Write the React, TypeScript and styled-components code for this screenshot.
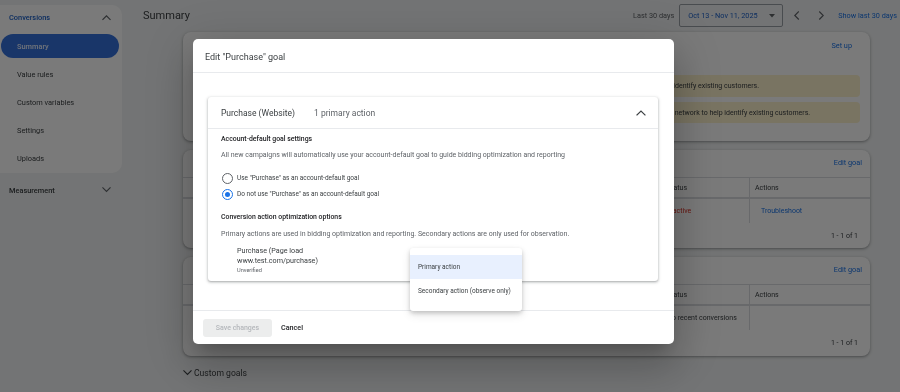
import React from "react";
import styled, { createGlobalStyle } from "styled-components";

const Global = createGlobalStyle`
  html, body { margin: 0; padding: 0; }
  body { font-family: Roboto, "Noto Sans", Arial, sans-serif; }
  * { box-sizing: border-box; }
`;

const Screen = styled.div`
  position: relative;
  width: 900px;
  height: 392px;
  overflow: hidden;
  display: flex;
  background: #f1f3f4;
  color: #3c4043;
  will-change: transform;
`;

/* ---------- sidebar ---------- */
const Sidebar = styled.nav`
  width: 122px;
  flex: none;
  padding-top: 5px;
  display: flex;
  flex-direction: column;
`;
const NavPanel = styled.div`
  background: #fff;
  border-radius: 0 10px 10px 0;
  padding-bottom: 3px;
  display: flex;
  flex-direction: column;
  gap: 4px;
`;
const NavGroup = styled.div<{ $open?: boolean }>`
  height: ${(p) => (p.$open ? 25 : 26)}px;
  margin-top: ${(p) => (p.$open ? 0 : 4)}px;
  display: flex;
  align-items: center;
  justify-content: space-between;
  padding: 0 11px 0 9px;
  font-size: 7.4px;
  font-weight: 500;
  color: ${(p) => (p.$open ? "#1a5fc8" : "#3c4043")};
`;
const NavItem = styled.div<{ $active?: boolean }>`
  height: 24px;
  margin: 0 3px 0 1px;
  border-radius: 12px;
  padding-left: 16px;
  display: flex;
  align-items: center;
  font-size: 7.4px;
  font-weight: ${(p) => (p.$active ? 500 : 400)};
  background: ${(p) => (p.$active ? "#3672dc" : "transparent")};
  color: ${(p) => (p.$active ? "#e8f0fe" : "#3c4043")};
`;

/* ---------- main ---------- */
const Main = styled.main`
  flex: 1;
  min-width: 0;
  display: flex;
  flex-direction: column;
`;
const TopBar = styled.header`
  height: 31px;
  display: flex;
  align-items: center;
  padding: 0 3px 0 21px;
`;
const PageTitle = styled.h1`
  margin: 0;
  flex: 1;
  font-size: 11px;
  font-weight: 400;
  color: #3c4043;
`;
const RangeLabel = styled.span`
  font-size: 7.3px;
  color: #5f6368;
  margin-right: 5px;
`;
const DateSelect = styled.div`
  width: 104px;
  height: 23px;
  border: 1px solid #9aa0a6;
  border-radius: 2px;
  display: flex;
  align-items: center;
  justify-content: space-between;
  padding: 0 7px 0 8px;
  font-size: 7.3px;
  color: #1a5fc8;
`;
const ArrowButton = styled.span<{ $gap: number }>`
  width: 16px;
  height: 16px;
  display: flex;
  align-items: center;
  justify-content: center;
  margin-left: ${(p) => p.$gap}px;
`;
const TopLink = styled.span`
  margin-left: 10px;
  font-size: 7.3px;
  color: #1a73e8;
`;
const Content = styled.div`
  padding: 1px 0 0 61px;
  width: 748px;
  display: flex;
  flex-direction: column;
  gap: 9px;
`;
const Card = styled.section<{ $h: number }>`
  height: ${(p) => p.$h}px;
  background: #fff;
  border-radius: 8px;
  box-shadow: 0 1px 2px rgba(60, 64, 67, 0.3), 0 1px 3px 1px rgba(60, 64, 67, 0.15);
  display: flex;
  flex-direction: column;
  overflow: hidden;
`;
const CardHeader = styled.div<{ $h: number; $pr: number }>`
  height: ${(p) => p.$h}px;
  flex: none;
  display: flex;
  align-items: center;
  justify-content: flex-end;
  padding: 0 ${(p) => p.$pr}px 2px 0;
  font-size: 7.3px;
  color: #1a73e8;
`;
const NoticeList = styled.div`
  display: flex;
  flex-direction: column;
  gap: 5px;
  padding: 15px 10px 0 12px;
`;
const Notice = styled.div<{ $h: number; $col: number }>`
  height: ${(p) => p.$h}px;
  background: #fdf2cc;
  border-radius: 4px;
  display: grid;
  grid-template-columns: ${(p) => p.$col}px 1fr;
  align-items: center;
  font-size: 7px;
  color: #3c4043;
`;
const TableRow = styled.div<{ $h: number; $head?: boolean }>`
  height: ${(p) => p.$h}px;
  flex: none;
  display: grid;
  grid-template-columns: 476px 90px 1fr;
  border-top: 1px solid #dadce0;
  ${(p) => (p.$head ? "border-bottom: 1px solid #dadce0;" : "")}
  font-size: 7px;
  color: #3c4043;
`;
const Cell = styled.div<{ $divider?: boolean; $pad?: number; $tone?: string }>`
  display: flex;
  align-items: center;
  padding-left: ${(p) => p.$pad ?? 8}px;
  border-left: ${(p) => (p.$divider ? "1px solid #dadce0" : "none")};
  color: ${(p) => p.$tone ?? "inherit"};
`;
const Pager = styled.div`
  flex: 1;
  display: flex;
  align-items: center;
  justify-content: flex-end;
  padding-right: 12px;
  font-size: 7px;
  color: #3c4043;
`;
const SectionToggle = styled.div`
  height: 16px;
  display: flex;
  align-items: center;
  gap: 2px;
  font-size: 8.6px;
  color: #3c4043;
`;

/* ---------- overlay / dialog ---------- */
const Scrim = styled.div`
  position: absolute;
  inset: 0;
  background: rgba(0, 0, 0, 0.52);
`;
const Dialog = styled.div`
  position: absolute;
  left: 193px;
  top: 39px;
  width: 481px;
  height: 305px;
  background: #fff;
  border-radius: 5px;
  display: flex;
  flex-direction: column;
  will-change: transform;
  box-shadow: 0 11px 15px -7px rgba(0, 0, 0, 0.2), 0 24px 38px 3px rgba(0, 0, 0, 0.14),
    0 9px 46px 8px rgba(0, 0, 0, 0.12);
`;
const DialogHeader = styled.div`
  height: 34px;
  flex: none;
  display: flex;
  align-items: center;
  padding: 2px 12px 0;
  border-bottom: 1px solid #e8eaed;
  font-size: 9px;
  color: #3c4043;
`;
const DialogBody = styled.div`
  flex: 1;
  padding: 24px 16px 0 15px;
`;
const GoalCard = styled.div`
  height: 184px;
  border-radius: 3px;
  box-shadow: 0 1px 2px rgba(60, 64, 67, 0.3), 0 1px 3px 1px rgba(60, 64, 67, 0.15);
  display: flex;
  flex-direction: column;
`;
const GoalHeader = styled.div`
  height: 32px;
  flex: none;
  display: flex;
  align-items: center;
  padding: 0 12px 0 13px;
  border-bottom: 1px solid #e8eaed;
  font-size: 8.5px;
  color: #3c4043;
`;
const GoalName = styled.span`
  flex: none;
  width: 93px;
  white-space: nowrap;
`;
const GoalMeta = styled.span`
  flex: 1;
  color: #5f6368;
`;
const GoalBody = styled.div`
  padding: 4px 13px 8px;
  display: flex;
  flex-direction: column;
`;
const SubHeading = styled.div<{ $mt: number }>`
  margin-top: ${(p) => p.$mt}px;
  line-height: 12px;
  font-size: 6.9px;
  font-weight: 500;
  color: #202124;
`;
const Help = styled.div<{ $mt: number }>`
  margin-top: ${(p) => p.$mt}px;
  line-height: 12px;
  font-size: 7px;
  color: #5f6368;
`;
const RadioGroup = styled.div`
  margin-top: 9px;
  display: flex;
  flex-direction: column;
`;
const RadioRow = styled.label`
  height: 16px;
  display: flex;
  align-items: center;
  gap: 4px;
  padding-left: 1px;
  font-size: 6.5px;
  color: #3c4043;
`;
const RadioMark = styled.span<{ $on?: boolean }>`
  width: 11px;
  height: 11px;
  border-radius: 50%;
  border: 1.4px solid ${(p) => (p.$on ? "#1a73e8" : "#5f6368")};
  display: flex;
  align-items: center;
  justify-content: center;
  &::after {
    content: "";
    width: 5px;
    height: 5px;
    border-radius: 50%;
    background: ${(p) => (p.$on ? "#1a73e8" : "transparent")};
  }
`;
const ActionInfo = styled.div`
  margin-top: 6px;
  padding-left: 16px;
  display: flex;
  flex-direction: column;
  font-size: 7.2px;
  line-height: 10px;
  color: #3c4043;
`;
const ActionStatus = styled.span`
  font-size: 5.6px;
  line-height: 8px;
  color: #5f6368;
`;
const DialogFooter = styled.div`
  height: 34px;
  flex: none;
  border-top: 1px solid #e8eaed;
  display: flex;
  align-items: center;
  gap: 9px;
  padding: 0 10px;
`;
const SaveButton = styled.button`
  width: 69px;
  height: 18px;
  border: none;
  border-radius: 3px;
  background: #eceded;
  color: #b4b7bb;
  font-family: inherit;
  font-size: 7px;
  font-weight: 500;
  padding: 0;
`;
const TextButton = styled.button`
  border: none;
  background: none;
  padding: 0;
  font-family: inherit;
  font-size: 7.2px;
  font-weight: 500;
  color: #202124;
`;
const Menu = styled.div`
  position: absolute;
  left: 217px;
  top: 209px;
  width: 112px;
  padding: 7px 0 8px;
  background: #fff;
  border-radius: 3px;
  box-shadow: 0 2px 4px rgba(0, 0, 0, 0.18), 0 4px 10px rgba(0, 0, 0, 0.1);
`;
const MenuItem = styled.div<{ $active?: boolean }>`
  height: 24px;
  display: flex;
  align-items: center;
  padding-left: 8px;
  font-size: 6.5px;
  color: #3c4043;
  background: ${(p) => (p.$active ? "#e8f0fe" : "transparent")};
`;

/* ---------- icons ---------- */
const Chevron = ({
  dir,
  w = 9,
  color = "#5f6368",
  sw = 1.3,
}: {
  dir: "up" | "down" | "left" | "right";
  w?: number;
  color?: string;
  sw?: number;
}) => {
  const paths: Record<string, string> = {
    up: "M1 6 L5 2 L9 6",
    down: "M1 2 L5 6 L9 2",
    left: "M6 1 L2 5 L6 9",
    right: "M3 1 L7 5 L3 9",
  };
  const horiz = dir === "up" || dir === "down";
  return (
    <svg width={horiz ? w : w * 0.8} height={horiz ? w * 0.8 : w} viewBox={horiz ? "0 0 10 8" : "0 0 8 10"}>
      <path d={paths[dir]} fill="none" stroke={color} strokeWidth={sw} strokeLinecap="square" />
    </svg>
  );
};
const Caret = () => (
  <svg width="6" height="4" viewBox="0 0 6 4">
    <path d="M0 0 L6 0 L3 3.5 Z" fill="#5f6368" />
  </svg>
);

export default function App() {
  return (
    <>
      <Global />
      <Screen>
        <Sidebar>
          <NavPanel>
            <NavGroup $open>
              <span>Conversions</span>
              <Chevron dir="up" />
            </NavGroup>
            <NavItem $active>Summary</NavItem>
            <NavItem>Value rules</NavItem>
            <NavItem>Custom variables</NavItem>
            <NavItem>Settings</NavItem>
            <NavItem>Uploads</NavItem>
          </NavPanel>
          <NavGroup>
            <span>Measurement</span>
            <Chevron dir="down" />
          </NavGroup>
        </Sidebar>

        <Main>
          <TopBar>
            <PageTitle>Summary</PageTitle>
            <RangeLabel>Last 30 days</RangeLabel>
            <DateSelect>
              <span>Oct 13 - Nov 11, 2025</span>
              <Caret />
            </DateSelect>
            <ArrowButton $gap={5}>
              <Chevron dir="left" w={9} />
            </ArrowButton>
            <ArrowButton $gap={8}>
              <Chevron dir="right" w={9} />
            </ArrowButton>
            <TopLink>Show last 30 days</TopLink>
          </TopBar>

          <Content>
            <Card $h={109}>
              <CardHeader $h={28} $pr={18}>Set up</CardHeader>
              <NoticeList>
                <Notice $h={22} $col={348}>
                  <span />
                  <span>Use your first-party customer data to help identify existing customers.</span>
                </Notice>
                <Notice $h={21} $col={370}>
                  <span />
                  <span>Share data with the Google partner network to help identify existing customers.</span>
                </Notice>
              </NoticeList>
            </Card>

            <Card $h={98}>
              <CardHeader $h={27} $pr={8}>Edit goal</CardHeader>
              <TableRow $h={21} $head>
                <Cell />
                <Cell>Status</Cell>
                <Cell $divider $pad={5}>Actions</Cell>
              </TableRow>
              <TableRow $h={25}>
                <Cell />
                <Cell $tone="#d93025">Inactive</Cell>
                <Cell $divider $pad={11} $tone="#1a73e8">Troubleshoot</Cell>
              </TableRow>
              <Pager>1 - 1 of 1</Pager>
            </Card>

            <Card $h={99}>
              <CardHeader $h={27} $pr={8}>Edit goal</CardHeader>
              <TableRow $h={21} $head>
                <Cell />
                <Cell>Status</Cell>
                <Cell $divider $pad={5}>Actions</Cell>
              </TableRow>
              <TableRow $h={25}>
                <Cell />
                <Cell>No recent conversions</Cell>
                <Cell $divider />
              </TableRow>
              <Pager>1 - 1 of 1</Pager>
            </Card>

            <SectionToggle>
              <Chevron dir="down" w={9} color="#3c4043" />
              <span>Custom goals</span>
            </SectionToggle>
          </Content>
        </Main>

        <Scrim />

        <Dialog role="dialog">
          <DialogHeader>Edit "Purchase" goal</DialogHeader>
          <DialogBody>
            <GoalCard>
              <GoalHeader>
                <GoalName>Purchase (Website)</GoalName>
                <GoalMeta>1 primary action</GoalMeta>
                <Chevron dir="up" w={10} color="#3c4043" sw={1.2} />
              </GoalHeader>
              <GoalBody>
                <SubHeading $mt={0}>Account-default goal settings</SubHeading>
                <Help $mt={4}>
                  All new campaigns will automatically use your account-default goal to guide bidding optimization and reporting
                </Help>
                <RadioGroup>
                  <RadioRow>
                    <RadioMark />
                    <span>Use "Purchase" as an account-default goal</span>
                  </RadioRow>
                  <RadioRow>
                    <RadioMark $on />
                    <span>Do not use "Purchase" as an account-default goal</span>
                  </RadioRow>
                </RadioGroup>
                <SubHeading $mt={9}>Conversion action optimization options</SubHeading>
                <Help $mt={5}>
                  Primary actions are used in bidding optimization and reporting. Secondary actions are only used for observation.
                </Help>
                <ActionInfo>
                  <span>Purchase (Page load</span>
                  <span>www.test.com/purchase)</span>
                  <ActionStatus>Unverified</ActionStatus>
                </ActionInfo>
              </GoalBody>
            </GoalCard>
          </DialogBody>
          <DialogFooter>
            <SaveButton disabled>Save changes</SaveButton>
            <TextButton>Cancel</TextButton>
          </DialogFooter>
          <Menu role="listbox">
            <MenuItem $active>Primary action</MenuItem>
            <MenuItem>Secondary action (observe only)</MenuItem>
          </Menu>
        </Dialog>
      </Screen>
    </>
  );
}
